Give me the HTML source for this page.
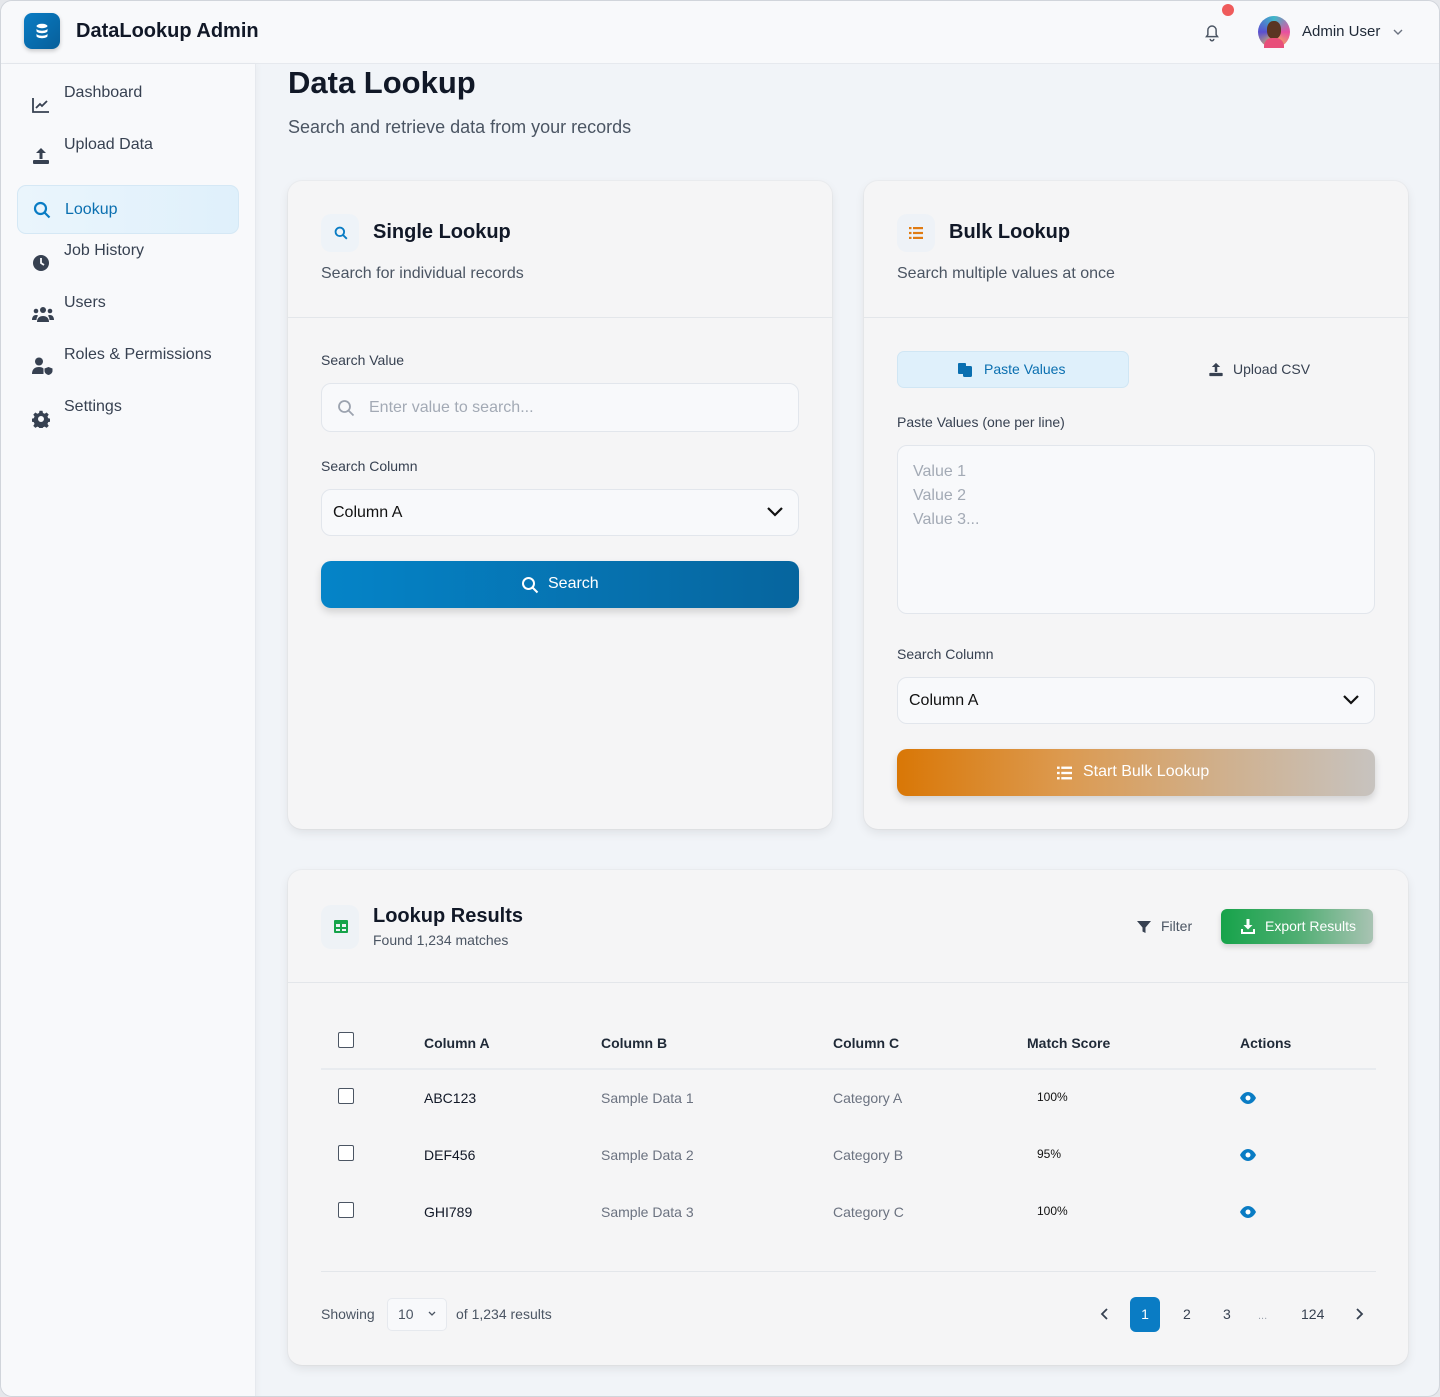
<!DOCTYPE html>
<html><head><meta charset="utf-8"><style>
*{box-sizing:border-box;margin:0;padding:0}
body{width:1440px;height:1397px;background:#e5e7eb;font-family:"Liberation Sans",sans-serif;position:relative;overflow:hidden;color:#111827}
.frame{position:absolute;left:0;top:0;width:1440px;height:1397px;border:1px solid #d1d5db;border-radius:12px;background:#f1f4f8;overflow:hidden}
.a{position:absolute}
.hdr{left:0;top:0;width:1438px;height:63px;background:#f8f9fb;border-bottom:1px solid #e6e9ee}
.side{left:0;top:63px;width:255px;height:1340px;background:#f8f9fb;border-right:1px solid #e6e9ee;box-shadow:2px 0 6px rgba(0,0,0,.03)}
.nav{position:absolute;left:63px;font-size:16px;color:#374151}
.card{position:absolute;background:#f5f5f6;border-radius:14px;box-shadow:0 4px 10px rgba(0,0,0,.08),0 0 0 1px #eceef1}
.lbl{position:absolute;font-size:14px;color:#374151}
.inp{position:absolute;background:#f8f9fb;border:1px solid #e2e6ec;border-radius:10px}
.th{position:absolute;top:1034px;font-size:14px;font-weight:bold;color:#1f2937}
.td{position:absolute;font-size:14px;color:#6b7280}
.cb{position:absolute;left:337px;width:16px;height:16px;border:1.5px solid #4b5563;border-radius:2px;background:#fff}
</style></head><body><div class="frame">
<div class="a hdr"></div>
<div class="a" style="left:23px;top:12px;width:36px;height:36px;border-radius:8px;background:linear-gradient(135deg,#0a7cc4,#075f9a);box-shadow:0 2px 4px rgba(0,0,0,.2)">
<svg width="36" height="36" viewBox="0 0 36 36"><g fill="#fff"><ellipse cx="18" cy="13" rx="5.5" ry="2.2"/><path d="M12.5 15.5c0 1.2 2.5 2.2 5.5 2.2s5.5-1 5.5-2.2v2.5c0 1.2-2.5 2.2-5.5 2.2s-5.5-1-5.5-2.2z"/><path d="M12.5 20.5c0 1.2 2.5 2.2 5.5 2.2s5.5-1 5.5-2.2v2.5c0 1.2-2.5 2.2-5.5 2.2s-5.5-1-5.5-2.2z"/></g></svg></div>
<div class="a" style="left:75px;top:19px;font-size:20px;font-weight:bold;color:#111827">DataLookup Admin</div>
<svg class="a" style="left:1200px;top:20px" width="22" height="22" viewBox="0 0 24 24" fill="none" stroke="#4b5563" stroke-width="1.6"><path d="M6 17h12l-1.5-2V10a4.5 4.5 0 0 0-9 0v5z"/><path d="M10 19.5a2 2 0 0 0 4 0"/></svg>
<div class="a" style="left:1221px;top:3px;width:12px;height:12px;border-radius:50%;background:#ef5b5b"></div>
<div class="a" style="left:1257px;top:15px;width:32px;height:32px;border-radius:50%;background:conic-gradient(#3fb8c9,#e84fa0,#f2c84b,#5a4fd1,#3fb8c9)"><div style="position:absolute;left:9px;top:5px;width:14px;height:18px;border-radius:45%;background:#5a3522"></div><div style="position:absolute;left:6px;top:22px;width:20px;height:10px;border-radius:8px 8px 0 0;background:#e84f7a"></div></div>
<div class="a" style="left:1301px;top:22px;font-size:15px;color:#1f2937">Admin User</div>
<svg class="a" style="left:1391px;top:26px" width="12" height="10" viewBox="0 0 12 10" fill="none" stroke="#6b7280" stroke-width="1.4"><path d="M2 3l4 4 4-4"/></svg>

<div class="a side"></div>
<svg class="a" style="left:31px;top:96px" width="18" height="16" viewBox="0 0 18 16" fill="none" stroke="#374151" stroke-width="1.8"><path d="M1 1v14h16"/><path d="M4 11l4-4 2 2 5-5"/></svg>
<div class="nav" style="top:83px">Dashboard</div>
<svg class="a" style="left:31px;top:146px" width="18" height="18" viewBox="0 0 18 18" fill="#374151"><path d="M9 1l5 5h-3.5v6h-3V6H4z"/><rect x="1" y="13" width="16" height="4" rx="1"/></svg>
<div class="nav" style="top:135px">Upload Data</div>
<div class="a" style="left:16px;top:184px;width:222px;height:49px;border-radius:9px;background:linear-gradient(90deg,#eaf5fc,#dff0fb);border:1px solid #d5e8f5"></div>
<svg class="a" style="left:32px;top:200px" width="18" height="18" viewBox="0 0 18 18" fill="none" stroke="#0a7cc4" stroke-width="2.2"><circle cx="7.5" cy="7.5" r="5.5"/><path d="M11.5 11.5l5 5"/></svg>
<div class="nav" style="left:64px;top:200px;color:#0a6fb0">Lookup</div>
<svg class="a" style="left:31px;top:253px" width="18" height="18" viewBox="0 0 18 18"><circle cx="9" cy="9" r="8" fill="#374151"/><path d="M9 4v5l3 2" stroke="#f8f9fb" stroke-width="1.8" fill="none"/></svg>
<div class="nav" style="top:241px">Job History</div>
<svg class="a" style="left:31px;top:305px" width="22" height="17" viewBox="0 0 22 17" fill="#374151"><circle cx="11" cy="4" r="3"/><circle cx="4" cy="5" r="2.3"/><circle cx="18" cy="5" r="2.3"/><path d="M5 16c0-4 2.5-6 6-6s6 2 6 6z"/><path d="M0 14c0-3 1.5-5 4-5 1 0 1.5.3 2 .6C5 11 4.5 12.5 4.5 14z"/><path d="M22 14c0-3-1.5-5-4-5-1 0-1.5.3-2 .6 1 1.4 1.5 2.9 1.5 4.4z"/></svg>
<div class="nav" style="top:293px">Users</div>
<svg class="a" style="left:31px;top:356px" width="22" height="18" viewBox="0 0 22 18" fill="#374151"><circle cx="7" cy="4.5" r="4"/><path d="M0 17c0-5 3-7 7-7 2 0 3.5.5 4.5 1.5V17z"/><path d="M16.5 10l4 1.5v2.5c0 2-2 3.5-4 4-2-.5-4-2-4-4v-2.5z"/></svg>
<div class="nav" style="top:345px">Roles &amp; Permissions</div>
<svg class="a" style="left:31px;top:409px" width="18" height="18" viewBox="0 0 24 24" fill="#374151"><path d="M10 1h4l.6 3 2.3 1 2.6-1.7 2.8 2.8-1.7 2.6 1 2.3 3 .6v4l-3 .6-1 2.3 1.7 2.6-2.8 2.8-2.6-1.7-2.3 1-.6 3h-4l-.6-3-2.3-1-2.6 1.7-2.8-2.8 1.7-2.6-1-2.3-3-.6v-4l3-.6 1-2.3-1.7-2.6 2.8-2.8 2.6 1.7 2.3-1zM12 8a4 4 0 1 0 0 8 4 4 0 0 0 0-8z"/></svg>
<div class="nav" style="top:397px">Settings</div>

<div class="a" style="left:287px;top:64px;font-size:31px;font-weight:bold;color:#111827">Data Lookup</div>
<div class="a" style="left:287px;top:116px;font-size:18px;color:#4b5563">Search and retrieve data from your records</div>

<div class="card" style="left:287px;top:180px;width:544px;height:648px"></div>
<div class="a" style="left:287px;top:316px;width:544px;height:1px;background:#e3e6ea"></div>
<div class="a" style="left:320px;top:213px;width:38px;height:38px;border-radius:10px;background:#eef3f8"></div>
<svg class="a" style="left:333px;top:225px" width="14" height="14" viewBox="0 0 18 18" fill="none" stroke="#0a7cc4" stroke-width="2.4"><circle cx="7.5" cy="7.5" r="5.5"/><path d="M11.5 11.5l5 5"/></svg>
<div class="a" style="left:372px;top:220px;font-size:20px;font-weight:bold">Single Lookup</div>
<div class="a" style="left:320px;top:264px;font-size:16px;color:#4b5563">Search for individual records</div>
<div class="lbl" style="left:320px;top:351px">Search Value</div>
<div class="inp" style="left:320px;top:382px;width:478px;height:49px"></div>
<svg class="a" style="left:336px;top:398px" width="18" height="18" viewBox="0 0 18 18" fill="none" stroke="#9ca3af" stroke-width="1.8"><circle cx="7.5" cy="7.5" r="5.5"/><path d="M11.5 11.5l5 5"/></svg>
<div class="a" style="left:368px;top:398px;font-size:16px;color:#a3aab5">Enter value to search...</div>
<div class="lbl" style="left:320px;top:457px">Search Column</div>
<div class="inp" style="left:320px;top:488px;width:478px;height:47px"></div>
<div class="a" style="left:332px;top:503px;font-size:16px;color:#111">Column A</div>
<svg class="a" style="left:765px;top:505px" width="18" height="12" viewBox="0 0 18 12" fill="none" stroke="#111" stroke-width="2.2"><path d="M2 2l7 7 7-7"/></svg>
<div class="a" style="left:320px;top:560px;width:478px;height:47px;border-radius:10px;background:linear-gradient(90deg,#0584c8,#06659e);box-shadow:0 4px 8px rgba(0,0,0,.15)"></div>
<svg class="a" style="left:520px;top:575px" width="18" height="18" viewBox="0 0 18 18" fill="none" stroke="#fff" stroke-width="2"><circle cx="7.5" cy="7.5" r="5.5"/><path d="M11.5 11.5l5 5"/></svg>
<div class="a" style="left:547px;top:574px;font-size:16px;color:#fff">Search</div>

<div class="card" style="left:863px;top:180px;width:544px;height:648px"></div>
<div class="a" style="left:863px;top:316px;width:544px;height:1px;background:#e3e6ea"></div>
<div class="a" style="left:896px;top:213px;width:38px;height:38px;border-radius:10px;background:#eef2f7"></div>
<svg class="a" style="left:908px;top:226px" width="14" height="12" viewBox="0 0 14 12" fill="#e07b12"><rect x="0" y="0" width="2.5" height="2.2"/><rect x="4" y="0" width="10" height="2.2"/><rect x="0" y="4.9" width="2.5" height="2.2"/><rect x="4" y="4.9" width="10" height="2.2"/><rect x="0" y="9.8" width="2.5" height="2.2"/><rect x="4" y="9.8" width="10" height="2.2"/></svg>
<div class="a" style="left:948px;top:220px;font-size:20px;font-weight:bold">Bulk Lookup</div>
<div class="a" style="left:896px;top:264px;font-size:16px;color:#4b5563">Search multiple values at once</div>
<div class="a" style="left:896px;top:350px;width:232px;height:37px;border-radius:7px;background:#dff0fb;border:1px solid #d0e6f4"></div>
<svg class="a" style="left:957px;top:361px" width="15" height="15" viewBox="0 0 15 15" fill="#0a6fb0"><rect x="0" y="1" width="8" height="11" rx="1"/><rect x="5" y="4" width="9" height="11" rx="1.5"/></svg>
<div class="a" style="left:983px;top:360px;font-size:14px;color:#0a6fb0">Paste Values</div>
<svg class="a" style="left:1207px;top:361px" width="16" height="15" viewBox="0 0 18 18" fill="#374151"><path d="M9 1l5 5h-3.5v6h-3V6H4z"/><rect x="1" y="13" width="16" height="4" rx="1"/></svg>
<div class="a" style="left:1232px;top:360px;font-size:14px;color:#374151">Upload CSV</div>
<div class="lbl" style="left:896px;top:413px">Paste Values (one per line)</div>
<div class="inp" style="left:896px;top:444px;width:478px;height:169px"></div>
<div class="a" style="left:912px;top:459px;font-size:16px;line-height:24px;color:#a3aab5">Value 1<br>Value 2<br>Value 3...</div>
<div class="lbl" style="left:896px;top:645px">Search Column</div>
<div class="inp" style="left:896px;top:676px;width:478px;height:47px"></div>
<div class="a" style="left:908px;top:691px;font-size:16px;color:#111">Column A</div>
<svg class="a" style="left:1341px;top:693px" width="18" height="12" viewBox="0 0 18 12" fill="none" stroke="#111" stroke-width="2.2"><path d="M2 2l7 7 7-7"/></svg>
<div class="a" style="left:896px;top:748px;width:478px;height:47px;border-radius:10px;background:linear-gradient(90deg,#d97706,#dc9a50 35%,#cfb190 70%,#c7c3bf);box-shadow:0 4px 8px rgba(0,0,0,.15)"></div>
<svg class="a" style="left:1056px;top:765px" width="15" height="14" viewBox="0 0 14 12" fill="#fff"><rect x="0" y="0" width="2.5" height="2.2"/><rect x="4" y="0" width="10" height="2.2"/><rect x="0" y="4.9" width="2.5" height="2.2"/><rect x="4" y="4.9" width="10" height="2.2"/><rect x="0" y="9.8" width="2.5" height="2.2"/><rect x="4" y="9.8" width="10" height="2.2"/></svg>
<div class="a" style="left:1082px;top:762px;font-size:16px;color:#fff">Start Bulk Lookup</div>

<div class="card" style="left:287px;top:869px;width:1120px;height:495px"></div>
<div class="a" style="left:287px;top:981px;width:1120px;height:1px;background:#e3e6ea"></div>
<div class="a" style="left:320px;top:904px;width:38px;height:44px;border-radius:10px;background:#eef2f6"></div>
<svg class="a" style="left:333px;top:919px" width="14" height="13" viewBox="0 0 14 13" fill="#16a34a"><path d="M0 1a1 1 0 0 1 1-1h12a1 1 0 0 1 1 1v11a1 1 0 0 1-1 1H1a1 1 0 0 1-1-1zM2 4v3h4V4zm6 0v3h4V4zM2 9v2h4V9zm6 0v2h4V9z"/></svg>
<div class="a" style="left:372px;top:904px;font-size:20px;font-weight:bold">Lookup Results</div>
<div class="a" style="left:372px;top:931px;font-size:14px;color:#4b5563">Found 1,234 matches</div>
<svg class="a" style="left:1136px;top:919px" width="14" height="14" viewBox="0 0 14 14" fill="#374151"><path d="M0 1h14L8.5 7.5V13l-3-1.5v-4z"/></svg>
<div class="a" style="left:1160px;top:917px;font-size:14px;color:#4b5563">Filter</div>
<div class="a" style="left:1220px;top:908px;width:152px;height:35px;border-radius:6px;background:linear-gradient(90deg,#16a34a,#4fae72 50%,#a9c3b3);box-shadow:0 3px 6px rgba(0,0,0,.15)"></div>
<svg class="a" style="left:1240px;top:918px" width="14" height="15" viewBox="0 0 14 15" fill="#fff"><path d="M5.5 0h3v6h3L7 10.5 2.5 6h3z"/><path d="M0 10h2v3h10v-3h2v5H0z"/></svg>
<div class="a" style="left:1264px;top:917px;font-size:14px;color:#fff">Export Results</div>

<div class="cb" style="top:1031px"></div>
<div class="th" style="left:423px">Column A</div>
<div class="th" style="left:600px">Column B</div>
<div class="th" style="left:832px">Column C</div>
<div class="th" style="left:1026px">Match Score</div>
<div class="th" style="left:1239px">Actions</div>
<div class="a" style="left:320px;top:1067px;width:1055px;height:2px;background:#e8ebef"></div>

<div class="cb" style="top:1087px"></div>
<div class="td" style="left:423px;top:1089px;color:#111827">ABC123</div>
<div class="td" style="left:600px;top:1089px">Sample Data 1</div>
<div class="td" style="left:832px;top:1089px">Category A</div>
<div class="td" style="left:1036px;top:1089px;font-size:12px;color:#111">100%</div>
<div class="cb" style="top:1144px"></div>
<div class="td" style="left:423px;top:1146px;color:#111827">DEF456</div>
<div class="td" style="left:600px;top:1146px">Sample Data 2</div>
<div class="td" style="left:832px;top:1146px">Category B</div>
<div class="td" style="left:1036px;top:1146px;font-size:12px;color:#111">95%</div>
<div class="cb" style="top:1201px"></div>
<div class="td" style="left:423px;top:1203px;color:#111827">GHI789</div>
<div class="td" style="left:600px;top:1203px">Sample Data 3</div>
<div class="td" style="left:832px;top:1203px">Category C</div>
<div class="td" style="left:1036px;top:1203px;font-size:12px;color:#111">100%</div>
<svg class="a" style="left:1239px;top:1091px" width="16" height="12" viewBox="0 0 16 12"><path d="M0 6C2 2 5 0 8 0s6 2 8 6c-2 4-5 6-8 6S2 10 0 6z" fill="#0a7cc4"/><circle cx="8" cy="6" r="2.5" fill="#fff"/></svg>
<svg class="a" style="left:1239px;top:1148px" width="16" height="12" viewBox="0 0 16 12"><path d="M0 6C2 2 5 0 8 0s6 2 8 6c-2 4-5 6-8 6S2 10 0 6z" fill="#0a7cc4"/><circle cx="8" cy="6" r="2.5" fill="#fff"/></svg>
<svg class="a" style="left:1239px;top:1205px" width="16" height="12" viewBox="0 0 16 12"><path d="M0 6C2 2 5 0 8 0s6 2 8 6c-2 4-5 6-8 6S2 10 0 6z" fill="#0a7cc4"/><circle cx="8" cy="6" r="2.5" fill="#fff"/></svg>

<div class="a" style="left:320px;top:1270px;width:1055px;height:1px;background:#e3e6ea"></div>
<div class="td" style="left:320px;top:1305px;color:#4b5563">Showing</div>
<div class="a" style="left:386px;top:1297px;width:60px;height:33px;border-radius:5px;background:#f8f9fb;border:1px solid #e6e9ee"></div>
<div class="td" style="left:397px;top:1305px;color:#4b5563">10</div>
<svg class="a" style="left:426px;top:1309px" width="10" height="8" viewBox="0 0 10 8" fill="none" stroke="#4b5563" stroke-width="1.3"><path d="M2 2l3 3 3-3"/></svg>
<div class="td" style="left:455px;top:1305px;color:#4b5563">of 1,234 results</div>
<svg class="a" style="left:1099px;top:1306px" width="10" height="14" viewBox="0 0 10 14" fill="none" stroke="#374151" stroke-width="1.8"><path d="M7 2L2 7l5 5"/></svg>
<div class="a" style="left:1129px;top:1296px;width:30px;height:35px;border-radius:6px;background:#0a7cc4;color:#fff;font-size:14px;text-align:center;line-height:35px">1</div>
<div class="td" style="left:1182px;top:1305px;color:#374151">2</div>
<div class="td" style="left:1222px;top:1305px;color:#374151">3</div>
<div class="td" style="left:1257px;color:#9ca3af;font-size:11px;top:1309px">...</div>
<div class="td" style="left:1300px;top:1305px;color:#374151">124</div>
<svg class="a" style="left:1353px;top:1306px" width="10" height="14" viewBox="0 0 10 14" fill="none" stroke="#374151" stroke-width="1.8"><path d="M3 2l5 5-5 5"/></svg>
</div></body></html>
